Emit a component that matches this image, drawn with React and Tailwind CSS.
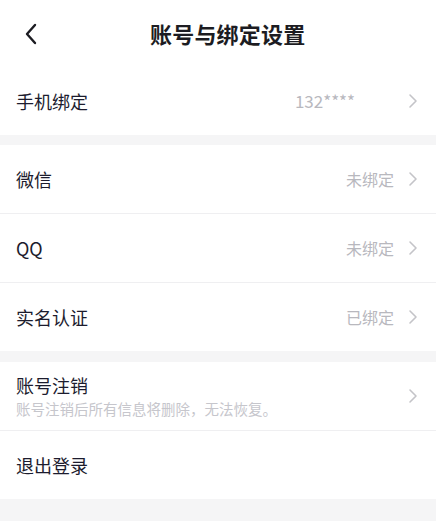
const font = { fontFamily: '"Noto Sans CJK SC", "Noto Sans", sans-serif' };

function Chevron() {
  return (
    <svg width="10" height="16" viewBox="0 0 10 16" fill="none" className="shrink-0">
      <path d="M2 2l6 6-6 6" stroke="#c4c4c8" strokeWidth="1.6" strokeLinecap="round" strokeLinejoin="round" />
    </svg>
  );
}

function Row({ label, value, sub, arrow = true, last, valueClass = "mr-[14px]" }) {
  return (
    <div className={`flex items-center pl-4 pr-[18px] bg-white ${last ? "h-[68px]" : "h-[69px] border-b border-[#efeff1]"}`}>
      <div className="flex-1 min-w-0">
        <div className="text-[18px] leading-6 text-[#1c1c2e]">{label}</div>
        {sub && <div className="text-[14.5px] leading-5 text-[#c6c6cc] mt-[2px]">{sub}</div>}
      </div>
      {value && <span className={`text-[16px] text-[#b8b8be] ${valueClass}`}>{value}</span>}
      {arrow && <Chevron />}
    </div>
  );
}

export default function App() {
  return (
    <div className="w-[436px] h-[521px] bg-[#f5f5f6] overflow-hidden" style={font}>
      <div className="bg-white">
        <div className="flex items-center h-[67px] pl-6">
          <svg width="14" height="22" viewBox="0 0 14 22" fill="none">
            <path d="M11 2L3 11l8 9" stroke="#1c1c22" strokeWidth="2.4" strokeLinecap="round" strokeLinejoin="round" />
          </svg>
          <h1 className="ml-[112px] text-[22px] font-bold text-[#1c1c22] tracking-[0.2px]">账号与绑定设置</h1>
        </div>
        <Row label="手机绑定" value="132****" valueClass="text-[17px] mr-[53px]" last />
      </div>

      <div className="mt-[10px]">
        <Row label="微信" value="未绑定" />
        <Row label="QQ" value="未绑定" />
        <Row label="实名认证" value="已绑定" last />
      </div>

      <div className="mt-[11px]">
        <Row label="账号注销" sub="账号注销后所有信息将删除，无法恢复。" />
        <Row label="退出登录" arrow={false} last />
      </div>
    </div>
  );
}
